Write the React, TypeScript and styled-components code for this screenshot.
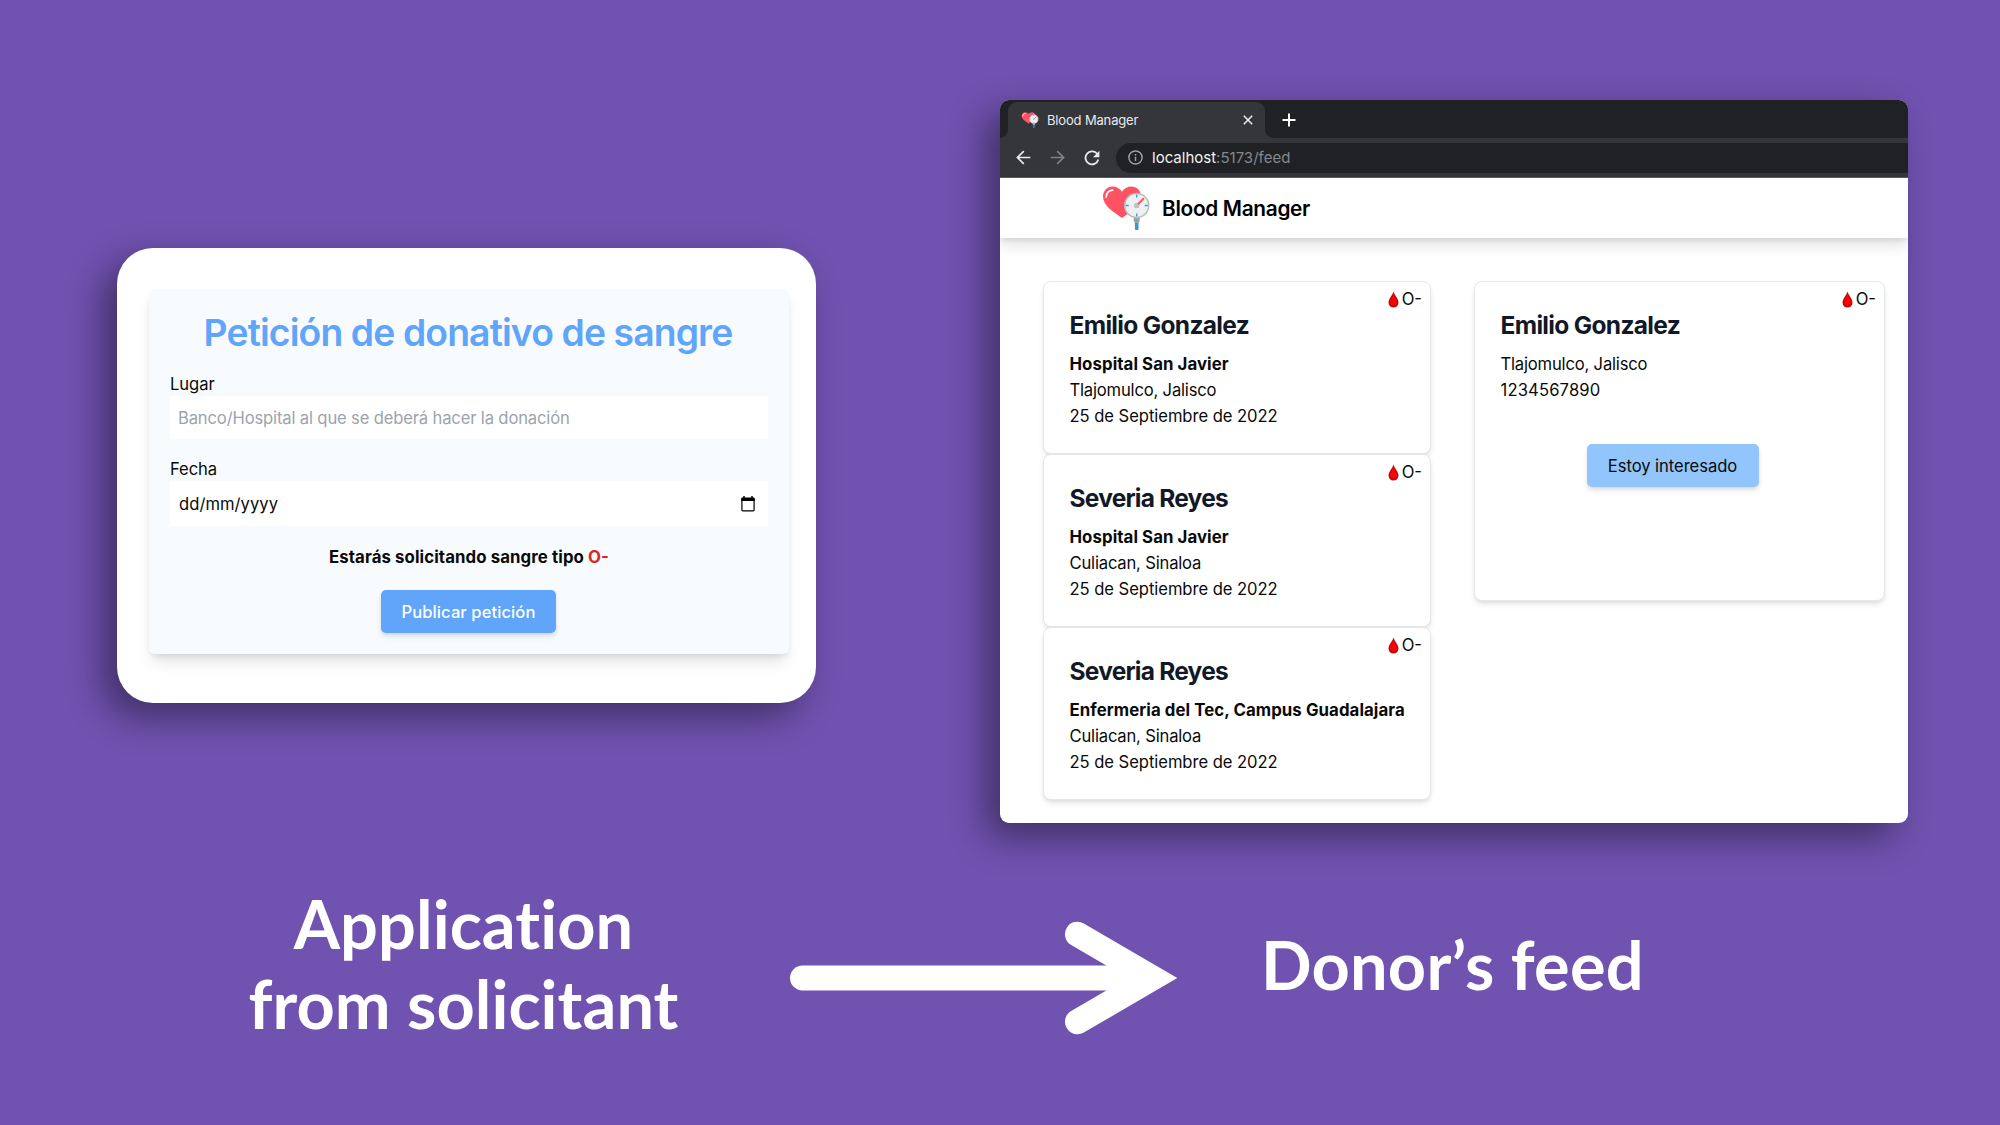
import React from "react";
import styled, { createGlobalStyle } from "styled-components";

const GlobalStyle = createGlobalStyle`
  *, *::before, *::after { box-sizing: border-box; }
  body { margin: 0; background: #7052b0; }
`;

const Slide = styled.main`
  display: flex;
  flex-direction: column;
  width: 2000px;
  height: 1125px;
  overflow: hidden;
  background: #7052b0;
  color: #0a0a0a;
  font-family: Inter, "Liberation Sans", sans-serif;
  font-size: 16.6px;
  line-height: 25.6px;
`;

const Shots = styled.section`
  display: flex;
  align-items: flex-start;
  gap: 184px;
  padding: 100px 0 0 117px;
`;

/* ---------- Request form ---------- */

const FormFrame = styled.div`
  width: 699px;
  height: 455px;
  margin-top: 148px;
  padding: 41px 27px 0 32px;
  background: #fff;
  border-radius: 36px;
  box-shadow: -14px 14px 36px rgba(0, 0, 0, 0.42);
`;

const Form = styled.form`
  display: flex;
  flex-direction: column;
  height: 365px;
  padding: 23px 21px 21px;
  background: #f7fbfe;
  border-radius: 6px;
  box-shadow: 0 11px 16px -3px rgba(0, 0, 0, 0.1), 0 4px 6px -2px rgba(0, 0, 0, 0.1);
`;

const FormTitle = styled.h1`
  margin: 0 2px 16px 0;
  font-size: 37.3px;
  font-weight: 600;
  line-height: 42px;
  letter-spacing: -0.88px;
  text-align: center;
  white-space: nowrap;
  color: #60a5fa;
`;

const Field = styled.label`
  display: flex;
  flex-direction: column;
  margin-bottom: 18px;
  padding-top: 2px;
  line-height: 24px;
  letter-spacing: -0.06px;
`;

const DateField = styled(Field)`
  margin-bottom: 19px;
  padding-top: 0;
`;

const Control = styled.span`
  display: flex;
  align-items: center;
  height: 43px;
  padding: 1px 8px 0;
  background: #fff;
  color: #9ca3af;
  letter-spacing: -0.153px;
`;

const DateControl = styled(Control)`
  justify-content: space-between;
  height: 45px;
  padding: 1px 13px 0 9px;
  color: #0a0a0a;
  letter-spacing: 0.04px;
`;

const CalendarIcon = styled.svg`
  margin-bottom: 1px;
`;

const Status = styled.p`
  margin: 0 0 20px;
  font-size: 16.8px;
  font-weight: 700;
  line-height: 25px;
  letter-spacing: 0.1px;
  text-align: center;
  font-feature-settings: "case";
`;

const BloodType = styled.span`
  color: #dc2626;
`;

const Button = styled.button<{ $primary?: boolean }>`
  width: ${(p) => (p.$primary ? 175 : 172)}px;
  height: 43px;
  padding: 2px 0 0;
  border: 0;
  border-radius: 5px;
  background: ${(p) => (p.$primary ? "#60a5fa" : "#93c5fd")};
  color: ${(p) => (p.$primary ? "#fff" : "#0a0a0a")};
  box-shadow: 0 4px 6px -1px rgba(0, 0, 0, 0.1), 0 2px 4px -1px rgba(0, 0, 0, 0.1);
  font: ${(p) => (p.$primary ? 500 : 400)} 16.6px/25.6px Inter, "Liberation Sans", sans-serif;
  letter-spacing: ${(p) => (p.$primary ? "0.07px" : "-0.05px")};
`;

const SubmitButton = styled(Button)`
  align-self: center;
  margin-right: 1px;
`;

/* ---------- Browser window ---------- */

const Browser = styled.div`
  display: flex;
  flex-direction: column;
  width: 908px;
  height: 723px;
  overflow: hidden;
  background: #fff;
  border-radius: 9px;
  box-shadow: -14px 14px 36px rgba(0, 0, 0, 0.42);
`;

const TabStrip = styled.div`
  display: flex;
  height: 38px;
  padding: 2px 0 0 8px;
  background: #202124;
`;

const Tab = styled.div`
  position: relative;
  display: flex;
  align-items: center;
  width: 257px;
  padding: 0 12px 0 13px;
  border-radius: 9px 9px 0 0;
  background: #35363a;
  color: #e8eaed;
  font-size: 13px;
  letter-spacing: -0.16px;

  &::before,
  &::after {
    content: "";
    position: absolute;
    bottom: 0;
    width: 8px;
    height: 8px;
  }
  &::before {
    left: -8px;
    background: radial-gradient(circle at 0 0, #202124 7.5px, #35363a 8px);
  }
  &::after {
    right: -8px;
    background: radial-gradient(circle at 100% 0, #202124 7.5px, #35363a 8px);
  }
`;

const TabTitle = styled.span`
  flex: 1;
  margin-left: 8px;
  padding-top: 2px;
`;

const NewTab = styled.span`
  display: flex;
  align-items: center;
  margin-left: 17px;
`;

const Toolbar = styled.div`
  display: flex;
  align-items: center;
  height: 40px;
  padding: 0 0 0 16px;
  background: #35363a;
  border-bottom: 1px solid #5a5b5f;
`;

const NavIcon = styled.svg`
  margin-right: 19px;
`;

const ReloadIcon = styled(NavIcon)`
  margin-right: 16px;
`;

const Omnibox = styled.div`
  display: flex;
  flex: 1;
  align-items: center;
  height: 30px;
  padding-left: 12px;
  border-radius: 15px 0 0 15px;
  background: #202124;
  color: #85888c;
  font-size: 15px;
`;

const Url = styled.span`
  margin-left: 9px;
  padding-top: 1px;
`;

const Host = styled.span`
  color: #f1f3f4;
`;

const AppHeader = styled.header`
  position: relative;
  display: flex;
  align-items: center;
  height: 60px;
  padding-left: 102px;
  background: #fff;
  box-shadow: 0 8px 14px 0 rgba(0, 0, 0, 0.1), 0 3px 6px -1px rgba(0, 0, 0, 0.1);
`;

const Brand = styled.span`
  margin-left: 12px;
  padding-top: 2px;
  font-size: 20.8px;
  font-weight: 600;
  letter-spacing: -0.31px;
  color: #000;
`;

const Feed = styled.div`
  display: flex;
  align-items: flex-start;
  gap: 43px;
  padding: 43px 23px 0 43px;
`;

const CardList = styled.div`
  width: 388px;
`;

const Card = styled.article`
  position: relative;
  height: 173px;
  padding: 27px 0 0 25.5px;
  background: #fff;
  border: 1px solid #e5e7eb;
  border-radius: 8px;
  box-shadow: 0 4px 6px -1px rgba(0, 0, 0, 0.1), 0 2px 4px -1px rgba(0, 0, 0, 0.06);
`;

const DetailCard = styled(Card)`
  flex: 1;
  height: 320px;
`;

const Name = styled.h2<{ $track: number }>`
  margin: 0 0 10px;
  font-size: 24.5px;
  font-weight: 700;
  line-height: 32px;
  letter-spacing: ${(p) => p.$track}px;
  color: #111827;
`;

const Line = styled.p<{ $track?: number }>`
  margin: 0;
  line-height: 26px;
  white-space: nowrap;
  letter-spacing: ${(p) => p.$track ?? -0.18}px;
`;

const Place = styled(Line)`
  font-size: 16.8px;
  font-weight: 700;
  letter-spacing: 0.08px;
`;

const Badge = styled.span`
  position: absolute;
  top: 5px;
  right: 8.5px;
  display: flex;
  align-items: center;
  gap: 3px;
  letter-spacing: -0.3px;
  font-feature-settings: "case";
`;

const Action = styled.div`
  margin: 41px 0 0 86px;
`;

/* ---------- Captions ---------- */

const Captions = styled.section`
  display: flex;
  align-items: center;
  height: 160px;
  margin-top: 60px;
  padding-left: 217px;
`;

const Caption = styled.h3<{ $width?: number }>`
  width: ${(p) => (p.$width ? `${p.$width}px` : "auto")};
  margin: 0;
  padding-top: ${(p) => (p.$width ? 0 : 2)}px;
  font: 700 66.7px/80px Lato, "Liberation Sans", sans-serif;
  font-variant-ligatures: none;
  letter-spacing: ${(p) => (p.$width ? 0.06 : 0.22)}px;
  text-align: center;
  white-space: nowrap;
  color: #fff;
`;

const Arrow = styled.svg`
  margin: 29px 71px 0 70px;
`;

const Logo = ({ width, height }: { width: number; height: number }) => (
  <svg width={width} height={height} viewBox="0 0 48 44">
    <path
      d="M20 32C13 27 1 20 1 10.5 1 4.500 5.500.5 10.500.5c4 0 7.500 2 9.500 5.200C22 2.500 25.500.5 29.500.5c5 0 9.500 4 9.500 10C39 20 27 27 20 32z"
      fill="#ff5364"
    />
    <path d="M4.200 11c.3-4 2.800-6.500 6.300-6.800" fill="none" stroke="#fff" strokeWidth="1.800" strokeLinecap="round" />
    <path d="M31.700 31h6v4l-1.200 2h-3.600l-1.200-2z" fill="#95a5a5" />
    <path d="M32.900 37h3.600v6a1 1 0 0 1-1 1h-1.600a1 1 0 0 1-1-1z" fill="#3b97d3" />
    <circle cx="34.700" cy="19.500" r="12" fill="#ecf0f1" stroke="#b5bcc0" strokeWidth="1.500" />
    <path d="M34.700 8.500v3M34.700 27.500v3M23.700 19.500h3M42.700 19.500h3" stroke="#3b97d3" strokeWidth="1.300" />
    <circle cx="34.700" cy="19.500" r="2.700" fill="#bdc3c7" />
    <path d="M36.500 17.700l5-4.900" stroke="#ff5364" strokeWidth="1.900" strokeLinecap="round" />
  </svg>
);

const Drop = () => (
  <svg width="11" height="17" viewBox="0 0 11 17">
    <path d="M5.500.4C6.300 4 10.500 7.600 10.500 11.600a5 5 0 0 1-10 0C.5 7.600 4.700 4 5.500.4z" fill="#c40808" />
    <path d="M5.500 3.200C6.100 6 9 8.700 9 11.500a3.600 3.600 0 0 1-7 0C2 8.700 4.900 6 5.500 3.200z" fill="#fb0307" />
  </svg>
);

const BloodBadge = () => (
  <Badge>
    <Drop />
    O-
  </Badge>
);

const requests = [
  { name: "Emilio Gonzalez", track: -0.67, place: "Hospital San Javier", city: "Tlajomulco, Jalisco" },
  { name: "Severia Reyes", track: -0.77, place: "Hospital San Javier", city: "Culiacan, Sinaloa" },
  { name: "Severia Reyes", track: -0.77, place: "Enfermeria del Tec, Campus Guadalajara", city: "Culiacan, Sinaloa" },
];

export default function App() {
  return (
    <Slide>
      <GlobalStyle />
      <Shots>
        <FormFrame>
          <Form>
            <FormTitle>Petición de donativo de sangre</FormTitle>
            <Field>
              Lugar
              <Control>Banco/Hospital al que se deberá hacer la donación</Control>
            </Field>
            <DateField>
              Fecha
              <DateControl>
                dd/mm/yyyy
                <CalendarIcon width="14" height="16" viewBox="0 0 14 16">
                  <path d="M1.500 1.500h11a1.200 1.200 0 0 1 1.200 1.200V5H.3V2.700A1.200 1.200 0 0 1 1.500 1.500z" />
                  <path d="M3 0v2M11 0v2" stroke="#000" strokeWidth="1.500" />
                  <rect x="0.900" y="2.500" width="12.200" height="12.300" rx="0.800" fill="none" stroke="#000" strokeWidth="1.200" />
                </CalendarIcon>
              </DateControl>
            </DateField>
            <Status>
              Estarás solicitando sangre tipo <BloodType>O-</BloodType>
            </Status>
            <SubmitButton type="button" $primary>
              Publicar petición
            </SubmitButton>
          </Form>
        </FormFrame>

        <Browser>
          <TabStrip>
            <Tab>
              <Logo width={18} height={16} />
              <TabTitle>Blood Manager</TabTitle>
              <svg width="10" height="10" viewBox="0 0 10 10" stroke="#e8eaed" strokeWidth="1.600">
                <path d="M0.800 0.800L9.200 9.200M9.200 0.800L0.800 9.200" />
              </svg>
            </Tab>
            <NewTab>
              <svg width="14" height="14" viewBox="0 0 14 14" stroke="#fff" strokeWidth="2">
                <path d="M7 0.500v13M0.500 7h13" />
              </svg>
            </NewTab>
          </TabStrip>
          <Toolbar>
            <NavIcon width="15" height="15" viewBox="0 0 15 15" fill="none" stroke="#e8eaed" strokeWidth="1.700">
              <path d="M14.300 7.500H1.500M7.800 1.100L1.400 7.500l6.400 6.400" />
            </NavIcon>
            <NavIcon width="15" height="15" viewBox="0 0 15 15" fill="none" stroke="#7f8083" strokeWidth="1.700">
              <path d="M.7 7.500h12.800M7.200 1.100l6.400 6.400-6.400 6.400" />
            </NavIcon>
            <ReloadIcon width="16" height="16" viewBox="0 0 16 16" fill="none" stroke="#e8eaed" strokeWidth="1.800">
              <path d="M13.600 4.600A6.500 6.500 0 1 0 14.300 9.500" />
              <path d="M15.400.8v6.400H9z" fill="#e8eaed" stroke="none" />
            </ReloadIcon>
            <Omnibox>
              <svg width="15" height="15" viewBox="0 0 15 15" fill="none" stroke="#9aa0a6" strokeWidth="1.500">
                <circle cx="7.500" cy="7.500" r="6.600" />
                <path d="M7.500 6.700v4.300M7.500 3.900v1.600" />
              </svg>
              <Url>
                <Host>localhost</Host>:5173/feed
              </Url>
            </Omnibox>
          </Toolbar>
          <AppHeader>
            <Logo width={48} height={44} />
            <Brand>Blood Manager</Brand>
          </AppHeader>
          <Feed>
            <CardList>
              {requests.map((r, i) => (
                <Card key={i}>
                  <BloodBadge />
                  <Name $track={r.track}>{r.name}</Name>
                  <Place>{r.place}</Place>
                  <Line>{r.city}</Line>
                  <Line $track={-0.05}>25 de Septiembre de 2022</Line>
                </Card>
              ))}
            </CardList>
            <DetailCard>
              <BloodBadge />
              <Name $track={-0.67}>Emilio Gonzalez</Name>
              <Line>Tlajomulco, Jalisco</Line>
              <Line $track={0.15}>1234567890</Line>
              <Action>
                <Button type="button">Estoy interesado</Button>
              </Action>
            </DetailCard>
          </Feed>
        </Browser>
      </Shots>

      <Captions>
        <Caption $width={493}>
          Application
          <br />
          from solicitant
        </Caption>
        <Arrow width="410" height="120" viewBox="0 0 410 120" fill="none" stroke="#fff" strokeWidth="25" strokeLinecap="round">
          <path d="M22.500 60H370" />
          <path d="M297.500 16.200L372.500 60l-75 43.800" strokeMiterlimit="10" />
        </Arrow>
        <Caption>Donor’s feed</Caption>
      </Captions>
    </Slide>
  );
}
